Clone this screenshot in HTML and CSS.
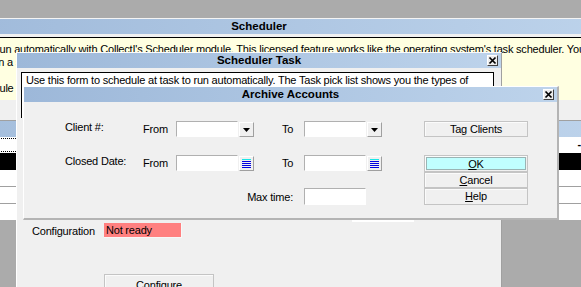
FILE: index.html
```html
<!DOCTYPE html>
<html lang="en">
<head>
    <meta charset="UTF-8">
    <title>Scheduler</title>
    <link rel="stylesheet" href="styles.css">
</head>
<body>

<div class="desktop">

    <!-- main scheduler window, wider than the screen -->
    <section class="win win-main">
        <header class="titlebar">Scheduler</header>
        <div class="info">
            <p>run automatically with CollectI's Scheduler module. This licensed feature works like the operating system's task scheduler. You</p>
            <p>in a specific order, at a set time of day.</p>
            <p>&nbsp;</p>
            <p>rule</p>
        </div>
        <div class="grid">
            <div class="row head"></div>
            <div class="row focus"><span class="focus-cell"></span><span class="mark">-</span></div>
            <div class="row sel"></div>
            <div class="row line"></div>
            <div class="row line"></div>
            <div class="row"></div>
        </div>
    </section>

    <section class="win win-task">
        <header class="titlebar">Scheduler Task
            <span class="close"><svg width="9" height="9" viewBox="0 0 9 9"><path d="M1.5 1.5 L7.5 7.5 M7.5 1.5 L1.5 7.5" stroke="#000" stroke-width="1.7"/></svg></span>
        </header>
        <div class="task-note">Use this form to schedule at task to run automatically. The Task pick list shows you the types of</div>
        <div class="hidden-field"></div>
        <div class="config-row">
            <span class="config-label">Configuration</span>
            <span class="status">Not ready</span>
        </div>
        <div class="btn configure">Configure</div>
    </section>

    <section class="win win-archive">
        <header class="titlebar">Archive Accounts
            <span class="close"><svg width="9" height="9" viewBox="0 0 9 9"><path d="M1.5 1.5 L7.5 7.5 M7.5 1.5 L1.5 7.5" stroke="#000" stroke-width="1.7"/></svg></span>
        </header>
        <div class="form">
            <span class="lbl r1 c1">Client #:</span>
            <span class="lbl small r1 c2">From</span>
            <span class="field r1 c3"></span>
            <span class="pick r1 c4"><svg width="7" height="4" viewBox="0 0 7 4"><path d="M0 0 H7 L3.5 4 Z" fill="#000"/></svg></span>
            <span class="lbl small r1 c6">To</span>
            <span class="field r1 c7"></span>
            <span class="pick r1 c8"><svg width="7" height="4" viewBox="0 0 7 4"><path d="M0 0 H7 L3.5 4 Z" fill="#000"/></svg></span>
            <span class="btn r1 c10">Tag Clients</span>

            <span class="lbl r3 c1">Closed Date:</span>
            <span class="lbl small r3 c2">From</span>
            <span class="field r3 c3"></span>
            <span class="pick r3 c4"><svg width="9" height="10" viewBox="0 0 9 10"><path d="M0 0.5 H9" stroke="#19e6e6"/><path d="M0 2.5 H9 M0 4.5 H9 M0 6.5 H9 M0 8.5 H9" stroke="#0000e0"/></svg></span>
            <span class="lbl small r3 c6">To</span>
            <span class="field r3 c7"></span>
            <span class="pick r3 c8"><svg width="9" height="10" viewBox="0 0 9 10"><path d="M0 0.5 H9" stroke="#19e6e6"/><path d="M0 2.5 H9 M0 4.5 H9 M0 6.5 H9 M0 8.5 H9" stroke="#0000e0"/></svg></span>
            <span class="btn ok r3 c10"><span class="ok-face"><u>O</u>K</span></span>
            <span class="btn r4 c10"><u>C</u>ancel</span>

            <span class="lbl max r5">Max time:</span>
            <span class="field tall r5 c7"></span>
            <span class="btn r5 c10"><u>H</u>elp</span>
        </div>
    </section>

</div>

</body>
</html>
```

FILE: styles.css
```css
body {
    margin: 0;
    background: #ababab;
    font-family: "Liberation Sans", Arial, sans-serif;
    font-size: 11px;
    letter-spacing: -0.2px;
    color: #000;
}

p { margin: 0; }

.desktop {
    position: relative;
    width: 581px;
    height: 287px;
    overflow: hidden;
    background: #ababab;
}

/* windows sit on the desktop at their own spots */
.win {
    position: absolute;
    box-sizing: border-box;
    background: #f0f0f0;
}

.titlebar {
    position: relative;
    height: 15px;
    background: linear-gradient(to right, #9db8d9, #bdd3eb);
    font-weight: bold;
    font-size: 11.5px;
    letter-spacing: 0;
    line-height: 15px;
    text-align: center;
}

.close {
    position: absolute;
    top: 2px;
    right: 3px;
    width: 11px;
    height: 11px;
    box-sizing: border-box;
    background: #ececec;
    border: 1px solid;
    border-color: #fff #404040 #404040 #fff;
    display: flex;
    align-items: center;
    justify-content: center;
}

.close svg { display: block; }

/* Scheduler */
.win-main {
    left: -100px;
    top: 18px;
    width: 718px;
    border-top: 1px solid #f4f4f4;
}

.info {
    margin-top: 3px;
    height: 63px;
    box-sizing: border-box;
    border-top: 1px solid #000;
    background: #ffffe1;
    padding: 5px 0 0 96px;
    line-height: 13px;
    white-space: nowrap;
    overflow: hidden;
}

.grid {
    margin-top: 20px;
    border-top: 1px solid #a0a0a0;
    background: #fff;
}

.row { height: 16px; }
.row.head { background: linear-gradient(to right, #a2bcdb, #bdd3eb); }
.row.focus { display: flex; justify-content: space-between; padding-right: 37px; }
.row.sel { height: 17px; background: #000; }
.row.line { border-bottom: 1px solid #a0a0a0; }
.row.line:first-of-type { height: 17px; }

.focus-cell {
    margin: 1px 0 0 60px;
    width: 300px;
    height: 12px;
    border-top: 1px dotted #000;
    border-bottom: 1px dotted #000;
}

.mark {
    font-weight: bold;
    line-height: 14px;
}

/* Scheduler Task */
.win-task {
    left: 16px;
    top: 52px;
    width: 486px;
    height: 250px;
    border-top: 1px solid #fafafa;
    border-left: 1px solid #fff;
    border-right: 1px solid #a0a0a0;
}

.task-note {
    margin: 4px 7px 0 4px;
    height: 46px;
    box-sizing: border-box;
    border: 1px solid #000;
    border-bottom: none;
    background: #fff;
    padding: 1px 0 0 4px;
    line-height: 13px;
    white-space: nowrap;
    overflow: hidden;
}

.hidden-field {
    margin: 87px 0 0 335px;
    width: 62px;
    height: 17px;
    background: #fff;
}

.config-row {
    margin-top: 1px;
    display: flex;
    padding-left: 15px;
    height: 15px;
    line-height: 13px;
}

.config-label {
    width: 72px;
    padding-top: 2px;
}

.status {
    width: 78px;
    box-sizing: border-box;
    background: #ff8080;
    border-right: 1px solid #f8f8f8;
    border-bottom: 1px solid #f8f8f8;
    padding: 1px 0 0 2px;
}

.btn {
    box-sizing: border-box;
    border: 1px solid #c4c4c4;
    box-shadow: inset 1px 1px #fbfbfb;
    background: #f0f0f0;
    text-align: center;
    line-height: 14px;
}

.btn u { text-decoration: underline; }

.configure {
    margin: 36px 0 0 87px;
    width: 110px;
    height: 22px;
    padding-top: 3px;
}

/* Archive Accounts */
.win-archive {
    left: 23px;
    top: 86px;
    width: 536px;
    height: 134px;
    border-top: 1px solid #fff;
    border-left: 1px solid #fff;
    border-right: 2px solid #b4b4b4;
    border-bottom: 2px solid #b4b4b4;
}

.form {
    display: grid;
    grid-template-columns: 78px 33px 63px 15px 28px 22px 63px 15px 42px 104px;
    grid-template-rows: 16px 18px 17px 16px 17px;
    padding: 19px 0 0 41px;
    line-height: 13px;
}

.r1 { grid-row: 1; }
.r3 { grid-row: 3; }
.r4 { grid-row: 4; }
.r5 { grid-row: 5; }
.c1 { grid-column: 1; }
.c2 { grid-column: 2; }
.c3 { grid-column: 3; }
.c4 { grid-column: 4; }
.c6 { grid-column: 6; }
.c7 { grid-column: 7; }
.c8 { grid-column: 8; }
.c10 { grid-column: 10; }

.lbl { white-space: nowrap; }
.lbl.small { padding-top: 2px; }
.lbl.max {
    grid-column: 3 / 7;
    text-align: right;
    padding: 3px 11px 0 0;
}

.field {
    width: 62px;
    height: 16px;
    box-sizing: border-box;
    background: #fff;
    border: 1px solid;
    border-color: #b0b0b0 #fff #fff #b0b0b0;
}

.field.tall { height: 17px; }

.pick {
    margin-top: 1px;
    height: 15px;
    box-sizing: border-box;
    border: 1px solid;
    border-color: #fff #a0a0a0 #a0a0a0 #fff;
    background: #f0f0f0;
    display: flex;
    align-items: center;
    justify-content: center;
}

.pick svg { display: block; }

.ok { padding: 1px; }

.ok-face {
    display: block;
    height: 100%;
    box-sizing: border-box;
    border: 1px solid #9ab4b4;
    background: #c0ffff;
    line-height: 12px;
}
```
